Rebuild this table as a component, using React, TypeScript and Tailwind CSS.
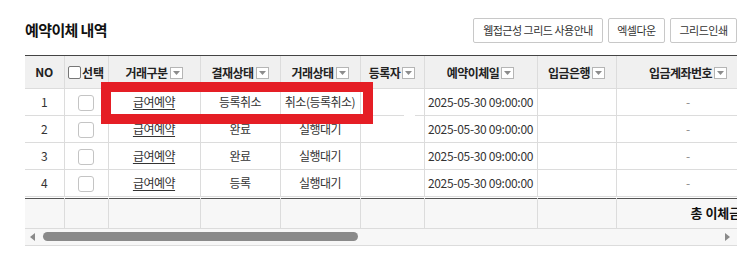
import React from "react";

const cols = [39, 44, 92, 80, 80, 64, 113, 79, 144];

function SortIcon() {
  return (
    <span className="ml-[2px] inline-flex h-[12px] w-[13px] items-center justify-center border border-[#b5b5b5] bg-white align-middle">
      <svg width="7" height="4" viewBox="0 0 7 4">
        <path d="M0 0 L7 0 L3.5 4 Z" fill="#8c8c8c" />
      </svg>
    </span>
  );
}

function Box({ small }: { small?: boolean }) {
  return (
    <span
      className={
        small
          ? "inline-block h-[13px] w-[13px] rounded-[2px] border border-[#777] bg-white align-middle"
          : "inline-block h-[16px] w-[16px] rounded-[3px] border border-[#c4c4c4] bg-white align-middle"
      }
    />
  );
}

const rows = [
  { no: "1", pay: "등록취소", state: "취소(등록취소)" },
  { no: "2", pay: "완료", state: "실행대기" },
  { no: "3", pay: "완료", state: "실행대기" },
  { no: "4", pay: "등록", state: "실행대기" },
];

export default function App() {
  const font = { fontFamily: '"Noto Sans CJK KR", "Noto Sans", sans-serif' };
  return (
    <div className="relative h-[262px] w-[749px] overflow-hidden bg-white text-[#333]" style={font}>
      <div className="mt-[18px] flex h-[25px] items-center justify-between pl-[25px] pr-[12px]">
        <div className="text-[15px] font-bold tracking-[-0.6px] text-[#111]">예약이체 내역</div>
        <div className="flex gap-[5px]">
          <button className="h-[25px] w-[130px] rounded-[2px] border border-[#c8c8c8] bg-white text-[11px] tracking-[-0.5px] text-[#333]">웹접근성 그리드 사용안내</button>
          <button className="h-[25px] w-[57px] rounded-[2px] border border-[#c8c8c8] bg-white text-[11px] tracking-[-0.5px] text-[#333]">엑셀다운</button>
          <button className="h-[25px] w-[67px] rounded-[2px] border border-[#c8c8c8] bg-white text-[11px] tracking-[-0.5px] text-[#333]">그리드인쇄</button>
        </div>
      </div>

      <div className="ml-[25px] mt-[12px] w-[712px] overflow-hidden border-t border-[#444]">
        <table className="table-fixed border-collapse text-[12px]" style={{ width: 735 }}>
          <colgroup>
            {cols.map((w, i) => (
              <col key={i} style={{ width: w }} />
            ))}
          </colgroup>
          <thead>
            <tr className="h-[32px] bg-[#f0f0f0] text-[12px] font-bold text-[#222]">
              <th className="border-b border-r border-[#dcdcdc] font-bold">NO</th>
              <th className="whitespace-nowrap border-b border-r border-[#dcdcdc] font-bold">
                <Box small />
                <span className="ml-[1px] align-middle">선택</span>
              </th>
              {["거래구분", "결재상태", "거래상태", "등록자", "예약이체일", "입금은행", "입금계좌번호"].map((h) => (
                <th key={h} className="whitespace-nowrap border-b border-r border-[#dcdcdc] font-bold tracking-[-0.5px]">
                  <span className="align-middle">{h}</span>
                  <SortIcon />
                </th>
              ))}
            </tr>
          </thead>
          <tbody>
            {rows.map((r) => (
              <tr key={r.no} className="h-[27px] bg-white">
                <td className="border-b border-r border-[#dcdcdc] text-center">{r.no}</td>
                <td className="border-b border-r border-[#dcdcdc] text-center">
                  <Box />
                </td>
                <td className="border-b border-r border-[#dcdcdc] text-center">
                  <span className="underline underline-offset-2 tracking-[-0.5px]">급여예약</span>
                </td>
                <td className="border-b border-r border-[#dcdcdc] text-center tracking-[-0.5px]">{r.pay}</td>
                <td className="whitespace-nowrap border-b border-r border-[#dcdcdc] text-center tracking-[-0.5px]">{r.state}</td>
                <td className="border-b border-r border-[#dcdcdc]"></td>
                <td className="whitespace-nowrap border-b border-r border-[#dcdcdc] text-center tracking-[-0.3px]">2025-05-30 09:00:00</td>
                <td className="border-b border-r border-[#dcdcdc]"></td>
                <td className="border-b border-r border-[#dcdcdc] text-center text-[#888]">-</td>
              </tr>
            ))}
            <tr className="h-[2px]">
              <td colSpan={9} className="p-0"></td>
            </tr>
            <tr className="h-[30px] border-t border-[#555] bg-[#f7f7f7]">
              {cols.slice(0, 8).map((_, i) => (
                <td key={i} className="border-b border-r border-[#dcdcdc]"></td>
              ))}
              <td className="whitespace-nowrap border-b border-[#dcdcdc] pl-[74px] text-[13px] font-bold text-[#111]">총 이체금액</td>
            </tr>
          </tbody>
        </table>
        <div className="flex h-[17px] items-center border-b border-[#dcdcdc] bg-[#f7f7f7] pl-[5px] pr-[7px]">
          <svg width="5" height="8" viewBox="0 0 5 8">
            <path d="M5 0 L0 4 L5 8 Z" fill="#8a8a8a" />
          </svg>
          <div className="ml-[8px] h-[9px] w-[315px] rounded-full bg-[#8a8a8a]" />
          <div className="flex-1" />
          <svg width="5" height="8" viewBox="0 0 5 8">
            <path d="M0 0 L5 4 L0 8 Z" fill="#8a8a8a" />
          </svg>
        </div>
      </div>

      <div className="absolute left-[101px] top-[82px] h-[42px] w-[272px] border-[10px] border-[#e51e25]" />
      <div className="absolute left-[404px] top-[114px] h-[3px] w-[11px] bg-white" />
    </div>
  );
}
